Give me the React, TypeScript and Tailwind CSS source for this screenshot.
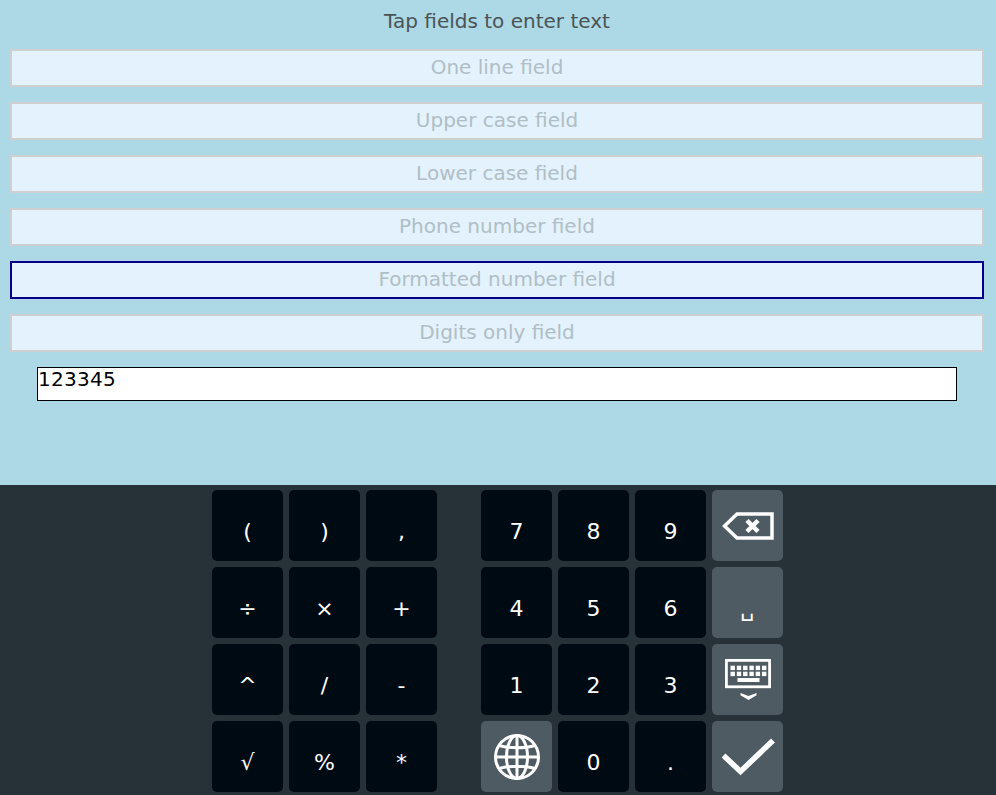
import React from 'react';

const fields = [
  'One line field',
  'Upper case field',
  'Lower case field',
  'Phone number field',
  'Formatted number field',
  'Digits only field',
];

const symbolKeys = ['(', ')', ',', '÷', '×', '+', '^', '/', '-', '√', '%', '*'];

function Key({ label }: { label: string }) {
  return (
    <div className="w-[71px] h-[71px] rounded-[5px] bg-[#000a12] flex items-end justify-center pb-[16px] text-white text-[22px] leading-[26px]">
      {label}
    </div>
  );
}

function ActionKey({ children }: { children: React.ReactNode }) {
  return (
    <div className="w-[71px] h-[71px] rounded-[5px] bg-[#4f5b62] flex items-center justify-center">
      {children}
    </div>
  );
}

function BackspaceIcon() {
  return (
    <svg width="52" height="30" viewBox="0 0 52 30" fill="none" stroke="white">
      <path d="M50 3H15L2.5 15L15 27H50Z" strokeWidth="3.5" />
      <path d="M25 9.5L36 20.5M36 9.5L25 20.5" strokeWidth="4.5" />
    </svg>
  );
}

function KeyboardHideIcon() {
  const dots = [];
  for (let r = 0; r < 2; r++) {
    for (let c = 0; c < 6; c++) {
      dots.push(<rect key={`${r}-${c}`} x={5.5 + c * 6.3} y={6.7 + r * 6} width="4.4" height="4.4" fill="white" />);
    }
  }
  return (
    <svg width="46" height="41" viewBox="0 0 46 41">
      <rect x="1.4" y="1.4" width="43.2" height="26.4" fill="none" stroke="white" strokeWidth="2.8" />
      {dots}
      <rect x="12.5" y="19" width="22" height="4" fill="white" />
      <path d="M15.5 34L23.5 37L31.5 34V36.2L23.5 41L15.5 36.2Z" fill="white" />
    </svg>
  );
}

function GlobeIcon() {
  return (
    <svg width="48" height="48" viewBox="0 0 48 48" fill="none" stroke="white" strokeWidth="3">
      <circle cx="24" cy="24" r="21.5" />
      <ellipse cx="24" cy="24" rx="10.5" ry="21.5" />
      <path d="M24 2.5V45.5M2.5 24H45.5M6 12.5C16 15.5 32 15.5 42 12.5M6 35.5C16 32.5 32 32.5 42 35.5" />
    </svg>
  );
}

function CheckIcon() {
  return (
    <svg width="54" height="38" viewBox="0 0 54 38" fill="none" stroke="white" strokeWidth="5.5">
      <path d="M2.5 17.5L19.5 33.5L52 2.5" />
    </svg>
  );
}

export default function App() {
  return (
    <div className="w-[996px] h-[795px] overflow-hidden flex flex-col bg-[#add8e6] font-['DejaVu_Sans',sans-serif]">
      <div className="w-[994px] h-[485px] flex flex-col">
        <p className="h-[49px] pt-[9px] text-center text-[20px] leading-[24px] text-[#4a5455]">
          Tap fields to enter text
        </p>
        <div className="flex flex-col gap-[15px] px-[10px]">
          {fields.map((field, i) => (
            <div
              key={field}
              className={`h-[38px] pb-[2px] border-2 bg-[#e3f2fd] flex items-center justify-center text-[20px] text-[#b0bec5] ${
                i === 4 ? 'border-[#00008b]' : 'border-[#cfcfcf]'
              }`}
            >
              {field}
            </div>
          ))}
        </div>
        <div className="mt-[15px] mx-[37px] h-[34px] border border-black bg-white text-[20px] leading-[22px] tracking-[0.28px] text-black">
          123345
        </div>
      </div>

      <div className="flex-1 bg-[#263238] pt-[5px] pl-[212px] flex gap-[44px]">
        <div className="grid grid-cols-[repeat(3,71px)] auto-rows-[71px] gap-[6px]">
          {symbolKeys.map(k => (
            <Key key={k} label={k} />
          ))}
        </div>
        <div className="grid grid-cols-[repeat(4,71px)] auto-rows-[71px] gap-[6px]">
          <Key label="7" />
          <Key label="8" />
          <Key label="9" />
          <ActionKey>
            <BackspaceIcon />
          </ActionKey>
          <Key label="4" />
          <Key label="5" />
          <Key label="6" />
          <div className="w-[71px] h-[71px] rounded-[5px] bg-[#4f5b62] flex items-end justify-center pb-[16px] text-white text-[22px] leading-[26px]">
            ␣
          </div>
          <Key label="1" />
          <Key label="2" />
          <Key label="3" />
          <ActionKey>
            <KeyboardHideIcon />
          </ActionKey>
          <ActionKey>
            <GlobeIcon />
          </ActionKey>
          <Key label="0" />
          <Key label="." />
          <ActionKey>
            <CheckIcon />
          </ActionKey>
        </div>
      </div>
    </div>
  );
}
